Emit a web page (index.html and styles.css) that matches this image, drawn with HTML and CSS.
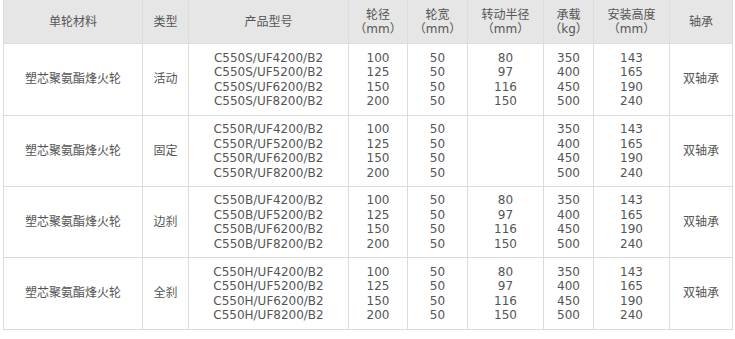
FILE: index.html
```html
<!DOCTYPE html>
<html lang="zh-CN">
<head>
<meta charset="utf-8">
<title>塑芯聚氨酯烽火轮</title>
<link rel="stylesheet" href="styles.css">
</head>
<body>
<div class="wrap">
<table class="spec">
<colgroup>
<col class="c1"><col class="c2"><col class="c3"><col class="c4"><col class="c5"><col class="c6"><col class="c7"><col class="c8"><col class="c9">
</colgroup>
<thead>
<tr>
<th>单轮材料</th><th>类型</th><th>产品型号</th><th>轮径<br>（mm）</th><th>轮宽<br>（mm）</th><th>转动半径<br>（mm）</th><th>承载<br>（kg）</th><th>安装高度<br>（mm）</th><th>轴承</th>
</tr>
</thead>
<tbody>
<tr>
<td>塑芯聚氨酯烽火轮</td><td>活动</td>
<td>C550S/UF4200/B2<br>C550S/UF5200/B2<br>C550S/UF6200/B2<br>C550S/UF8200/B2</td>
<td>100<br>125<br>150<br>200</td><td>50<br>50<br>50<br>50</td><td>80<br>97<br>116<br>150</td><td>350<br>400<br>450<br>500</td><td>143<br>165<br>190<br>240</td><td>双轴承</td>
</tr>
<tr>
<td>塑芯聚氨酯烽火轮</td><td>固定</td>
<td>C550R/UF4200/B2<br>C550R/UF5200/B2<br>C550R/UF6200/B2<br>C550R/UF8200/B2</td>
<td>100<br>125<br>150<br>200</td><td>50<br>50<br>50<br>50</td><td></td><td>350<br>400<br>450<br>500</td><td>143<br>165<br>190<br>240</td><td>双轴承</td>
</tr>
<tr>
<td>塑芯聚氨酯烽火轮</td><td>边刹</td>
<td>C550B/UF4200/B2<br>C550B/UF5200/B2<br>C550B/UF6200/B2<br>C550B/UF8200/B2</td>
<td>100<br>125<br>150<br>200</td><td>50<br>50<br>50<br>50</td><td>80<br>97<br>116<br>150</td><td>350<br>400<br>450<br>500</td><td>143<br>165<br>190<br>240</td><td>双轴承</td>
</tr>
<tr>
<td>塑芯聚氨酯烽火轮</td><td>全刹</td>
<td>C550H/UF4200/B2<br>C550H/UF5200/B2<br>C550H/UF6200/B2<br>C550H/UF8200/B2</td>
<td>100<br>125<br>150<br>200</td><td>50<br>50<br>50<br>50</td><td>80<br>97<br>116<br>150</td><td>350<br>400<br>450<br>500</td><td>143<br>165<br>190<br>240</td><td>双轴承</td>
</tr>
</tbody>
</table>
</div>
</body>
</html>
```

FILE: styles.css
```css
html, body {
  margin: 0;
  padding: 0;
  background: #ffffff;
}
.wrap {
  padding: 0 0 0 3px;
  margin-top: -1px;
}
.spec {
  border-collapse: collapse;
  table-layout: fixed;
  width: 729px;
  font-family: "DejaVu Sans", Verdana, "Noto Sans CJK SC", sans-serif;
  font-size: 12px;
  line-height: 14.5px;
  color: #555555;
  text-align: center;
}
.c1 { width: 139px; }
.c2 { width: 46px; }
.c3 { width: 160px; }
.c4 { width: 59px; }
.c5 { width: 60px; }
.c6 { width: 76px; }
.c7 { width: 50px; }
.c8 { width: 76px; }
.c9 { width: 63px; }
.spec th, .spec td {
  border: 1px solid #dcdcdc;
  padding: 0;
  vertical-align: middle;
  font-weight: normal;
}
.spec th {
  background: #e6e6e6;
  height: 43px;
  line-height: 14px;
}
.spec tbody tr {
  height: 71px;
}
.spec tbody tr:first-child,
.spec tbody tr:last-child {
  height: 72px;
}
```
